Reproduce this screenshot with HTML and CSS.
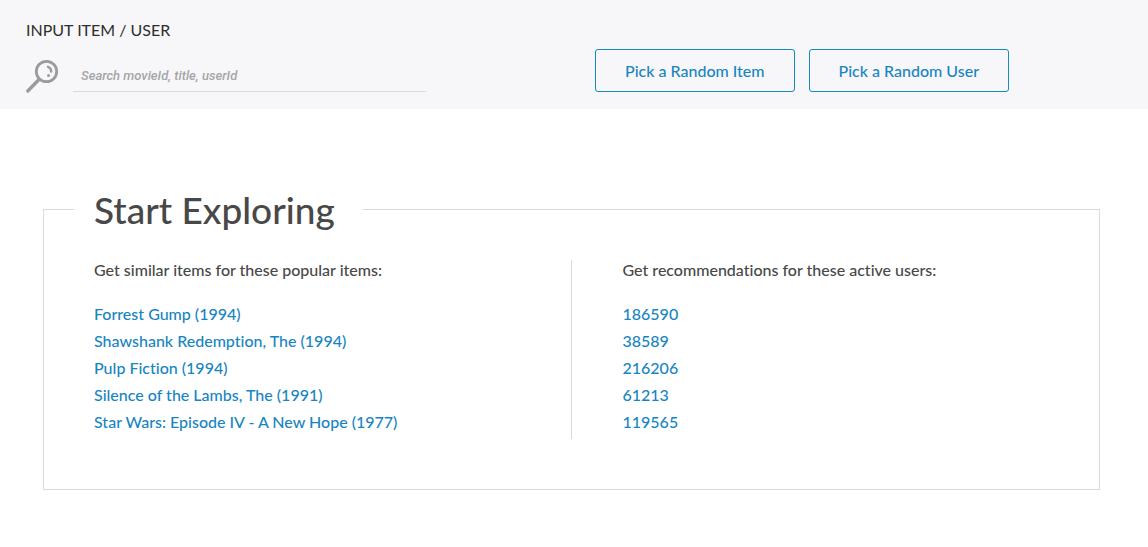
FILE: index.html
```html
<!DOCTYPE html>
<html lang="en">
<head>
<meta charset="utf-8">
<meta name="viewport" content="width=device-width, initial-scale=1">
<title>Recommender</title>
<link rel="stylesheet" href="styles.css">
</head>
<body>
<header class="topbar">
  <form class="search">
    <label class="search-label" for="query">INPUT ITEM / USER</label>
    <div class="search-row">
      <svg class="search-icon" viewBox="0 0 34 34" aria-hidden="true" fill="none" stroke="#9b9b9b" stroke-linecap="round">
        <circle cx="20.500" cy="13.500" r="10.200" stroke-width="2.800"/>
        <path d="M13 21.500L1.800 33" stroke-width="3.400"/>
        <path d="M22 8.800a5 5 0 0 1 3.200 4.700" stroke-width="2.400"/>
        <circle cx="22.500" cy="17.500" r="1.500" fill="#9b9b9b" stroke="none"/>
      </svg>
      <input class="search-input" id="query" type="text" placeholder="Search movieId, title, userId">
    </div>
  </form>
  <div class="actions">
    <button class="button" type="button">Pick a Random Item</button>
    <button class="button" type="button">Pick a Random User</button>
  </div>
</header>
<main class="page">
  <section class="explore">
    <h1 class="explore-title">Start Exploring</h1>
    <div class="columns">
      <div class="column">
        <p class="column-title">Get similar items for these popular items:</p>
        <ul class="links">
          <li><a href="#">Forrest Gump (1994)</a></li>
          <li><a href="#">Shawshank Redemption, The (1994)</a></li>
          <li><a href="#">Pulp Fiction (1994)</a></li>
          <li><a href="#">Silence of the Lambs, The (1991)</a></li>
          <li><a href="#">Star Wars: Episode IV - A New Hope (1977)</a></li>
        </ul>
      </div>
      <div class="column">
        <p class="column-title">Get recommendations for these active users:</p>
        <ul class="links">
          <li><a href="#">186590</a></li>
          <li><a href="#">38589</a></li>
          <li><a href="#">216206</a></li>
          <li><a href="#">61213</a></li>
          <li><a href="#">119565</a></li>
        </ul>
      </div>
    </div>
  </section>
</main>
</body>
</html>
```
FILE: styles.css
```css
* { box-sizing: border-box; }
body { margin: 0; background: #fff; color: #484848; font: 500 16px/27px Lato, sans-serif; font-variant-ligatures: none; }
.topbar { display: flex; align-items: flex-end; background: #f7f7f9; padding: 20px 26px 17px; }
.search { width: 400px; margin-right: 169px; }
.search-label { display: block; color: #2d2d2d; font-size: 16px; font-weight: 400; line-height: 20px; }
.search-row { display: flex; gap: 13px; margin-top: 18px; }
.search-icon { width: 34px; height: 34px; flex: none; overflow: visible; }
.search-input { flex: 1; min-width: 0; height: 34px; border: 0; border-bottom: 1px solid #d8dadd; border-radius: 0; background: transparent; padding: 1px 8px 0; font: italic 500 13px Roboto, sans-serif; color: #484848; }
.search-input::placeholder { color: #a5a5a5; opacity: 1; }
.actions { display: flex; gap: 14px; }
.button { height: 43px; padding: 0 29px 1px; border: 1px solid #148bbf; border-radius: 3px; background: transparent; color: #1785c1; font: 500 16px Lato, sans-serif; }
.page { padding: 100px 48px 57px 43px; }
.explore { border: 1px solid #d3dce1; padding: 0 52px 50px 50px; }
.explore-title { width: fit-content; margin: -28px 0 0 -20px; padding: 0 28px 0 20px; background: #fff; color: #484848; font-size: 37px; line-height: 56px; font-weight: 500; }
.columns { display: grid; grid-template-columns: 1fr 1fr; margin-top: 22px; }
.column { padding-bottom: 4px; }
.column + .column { border-left: 1px solid #d8dadd; padding-left: 51px; }
.column-title { margin: 0; line-height: 19px; }
.links { list-style: none; margin: 21px 0 0; padding: 0; }
.links a { color: #1785c1; text-decoration: none; }
```
